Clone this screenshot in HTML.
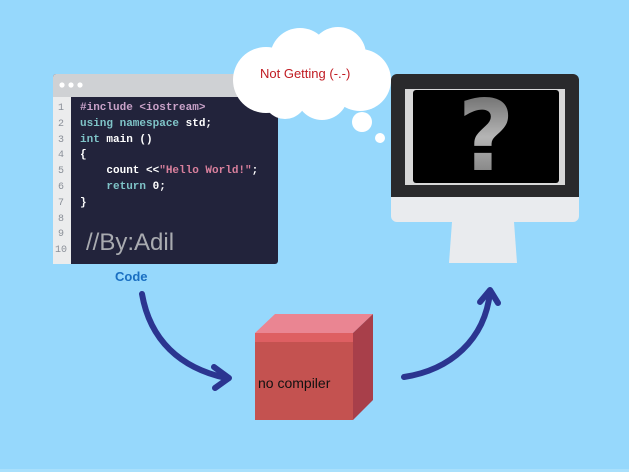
<!DOCTYPE html>
<html><head><style>
body{margin:0;width:629px;height:472px;overflow:hidden;background:#96d8fc;font-family:"Liberation Sans",sans-serif}
.code{position:absolute;left:80px;top:101px;font-family:"Liberation Mono",monospace;font-weight:bold;font-size:11px;line-height:15.8px;color:#fff;white-space:pre}
.ln{position:absolute;left:53px;width:16px;text-align:center;top:101px;font-family:"Liberation Mono",monospace;font-size:10px;line-height:15.8px;color:#8a8f98;white-space:pre}
.t{color:#7fc4c8}.p{color:#c9a2c9}.s{color:#d87f9c}
</style></head><body>
<svg width="629" height="472" style="position:absolute;left:0;top:0">
<rect x="0" y="469" width="629" height="3" fill="#a9e0fc"/>
<rect x="53" y="74" width="225" height="190" rx="3" fill="#22233b"/>
<rect x="53" y="74" width="225" height="23" rx="3" fill="#cfd1d4"/>
<rect x="53" y="94" width="225" height="3" fill="#cfd1d4"/>
<rect x="53" y="97" width="18" height="167" fill="#ebeced"/>
<circle cx="62" cy="85" r="2.6" fill="#fff"/><circle cx="71" cy="85" r="2.6" fill="#fff"/><circle cx="80" cy="85" r="2.6" fill="#fff"/>
<g fill="#fff">
<circle cx="266" cy="80" r="33"/><circle cx="300" cy="58" r="30"/><circle cx="338" cy="55" r="28"/>
<circle cx="360" cy="80" r="31"/><circle cx="322" cy="94" r="26"/><circle cx="285" cy="97" r="22"/>
<circle cx="362" cy="122" r="10"/><circle cx="380" cy="138" r="5"/>
</g>
<rect x="391" y="180" width="188" height="42" rx="6" fill="#e9ebee"/>
<path d="M391 80 a6 6 0 0 1 6 -6 h176 a6 6 0 0 1 6 6 v117 h-188z" fill="#2a2a2c"/>
<rect x="405" y="89" width="160" height="96" fill="#d8d8d8"/>
<rect x="413" y="90" width="146" height="93" rx="3" fill="#000"/>
<path d="M452 222 h62 l3 41 h-68z" fill="#e9ebee"/>
<defs><linearGradient id="g" x1="0" y1="0" x2="0" y2="1"><stop offset="0" stop-color="#5a5a5a"/><stop offset="0.5" stop-color="#b5b5b5"/><stop offset="1" stop-color="#6a6a6a"/></linearGradient></defs>
<text x="486" y="170" text-anchor="middle" font-family="DejaVu Sans" font-weight="bold" font-size="98" fill="url(#g)">?</text>
<path d="M255 333 L275 314 H373 L353 333 Z" fill="#ea8592"/>
<path d="M353 333 L373 314 V400 L353 420 Z" fill="#a83f4a"/>
<rect x="255" y="333" width="98" height="87" fill="#c45250"/>
<rect x="255" y="333" width="98" height="9" fill="#de5f62"/>
<g fill="none" stroke="#2b3590" stroke-width="6" stroke-linecap="round" stroke-linejoin="round">
<path d="M142 294 C150 340 180 368 226 378"/>
<path d="M214 367 L229 378 L215 388"/>
<path d="M404 377 C450 370 485 340 490 292"/>
<path d="M480 302 L490 290 L498 303"/>
</g>
</svg>
<div class="ln">1
2
3
4
5
6
7
8
9
10</div>
<div class="code"><span class="p">#include &lt;iostream&gt;</span>
<span class="t">using namespace</span> std;
<span class="t">int</span> main ()
{
    count &lt;&lt;<span class="s">"Hello World!"</span>;
    <span class="t">return</span> 0;
}</div>
<div style="position:absolute;left:86px;top:229px;font-size:24px;color:#a9abb0">//By:Adil</div>
<div style="position:absolute;left:115px;top:269px;font-size:13px;font-weight:bold;color:#1a6fc2">Code</div>
<div style="position:absolute;left:260px;top:66px;font-size:13px;color:#c01b22">Not Getting (-.-)</div>
<div style="position:absolute;left:258px;top:375px;font-size:14px;color:#111">no compiler</div>
</body></html>
